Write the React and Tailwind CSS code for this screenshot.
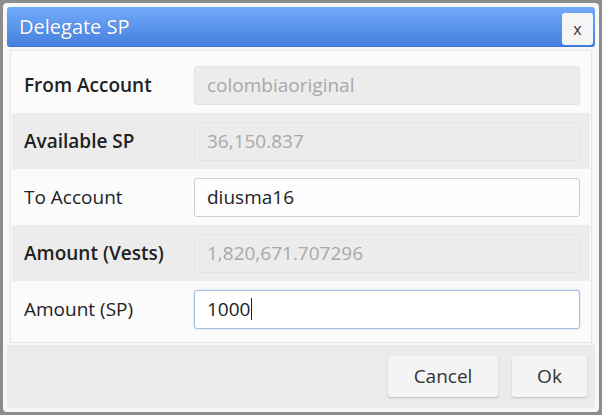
import React from 'react';

const rows = [
  { label: 'From Account', value: 'colombiaoriginal', readOnly: true },
  { label: 'Available SP', value: '36,150.837', readOnly: true },
  { label: 'To Account', value: 'diusma16' },
  { label: 'Amount (Vests)', value: '1,820,671.707296', readOnly: true },
  { label: 'Amount (SP)', value: '1000', focused: true },
];

const Row = ({ row, index }) => {
  const striped = index % 2 === 1;
  return (
    <div className={`h-[56px] flex items-center ${striped ? 'bg-[#ececec]' : 'bg-[#fbfbfb]'}`}>
      <div className={`w-[182px] pl-[12px] text-[19px] text-[#222] ${row.readOnly ? 'font-semibold' : 'font-normal'}`}>
        {row.label}
      </div>
      <div
        className={`flex-1 mr-[10px] h-[39px] rounded-[3px] flex items-center px-[12px] text-[19px] ${
          row.readOnly
            ? 'bg-[#ececec] border border-[#e4e4e4] text-[#a8a8a8]'
            : row.focused
            ? 'bg-white border border-[#9fc0e6] text-[#222] shadow-[0_0_2px_rgba(120,160,220,0.5)]'
            : 'bg-[#fdfdfd] border border-[#cfcfcf] text-[#222]'
        }`}
      >
        {row.value}
        {row.focused && <span className="inline-block w-[1px] h-[22px] bg-[#222] ml-[1px]" />}
      </div>
    </div>
  );
};

const App = () => {
  return (
    <div
      className="w-[602px] h-[415px] bg-[#8c8c8c] p-[3px]"
      style={{ fontFamily: '"Open Sans", "Noto Sans", sans-serif' }}
    >
      <div className="h-[409px] bg-[#f7f7f7] rounded-[4px] p-[4px] flex flex-col">
        {/* Title bar */}
        <div className="h-[40px] shrink-0 rounded-[3px] bg-gradient-to-b from-[#72aafa] to-[#4580de] border-b border-[#3a72d0] flex items-start justify-between pl-[12px] pr-[2px]">
          <span className="text-white text-[20px] font-medium leading-[40px] [text-shadow:0_0_1px_rgba(0,0,0,0.25)]">
            Delegate SP
          </span>
          <button className="mt-[6px] w-[31px] h-[32px] rounded-[3px] bg-[#f5f5f5] text-[#333] text-[16px] leading-none flex items-center justify-center">
            x
          </button>
        </div>

        {/* Body */}
        <div className="mx-[3px] mt-[3px] h-[293px] shrink-0 bg-[#fbfbfb] border border-[#e6e6e6] px-[1px] pt-[6px]">
          {rows.map((row, i) => (
            <Row key={row.label} row={row} index={i} />
          ))}
        </div>

        {/* Footer */}
        <div className="mt-[2px] flex-1 bg-[#ebebeb] rounded-b-[3px] flex items-start justify-end gap-[14px] pt-[11px] pr-[8px]">
          <button className="w-[110px] h-[41px] rounded-[3px] bg-[#f4f4f4] shadow-[0_1px_2px_rgba(0,0,0,0.2)] text-[19px] text-[#333]">
            Cancel
          </button>
          <button className="w-[75px] h-[41px] rounded-[3px] bg-[#f4f4f4] shadow-[0_1px_2px_rgba(0,0,0,0.2)] text-[19px] text-[#333]">
            Ok
          </button>
        </div>
      </div>
    </div>
  );
};

export default App;
